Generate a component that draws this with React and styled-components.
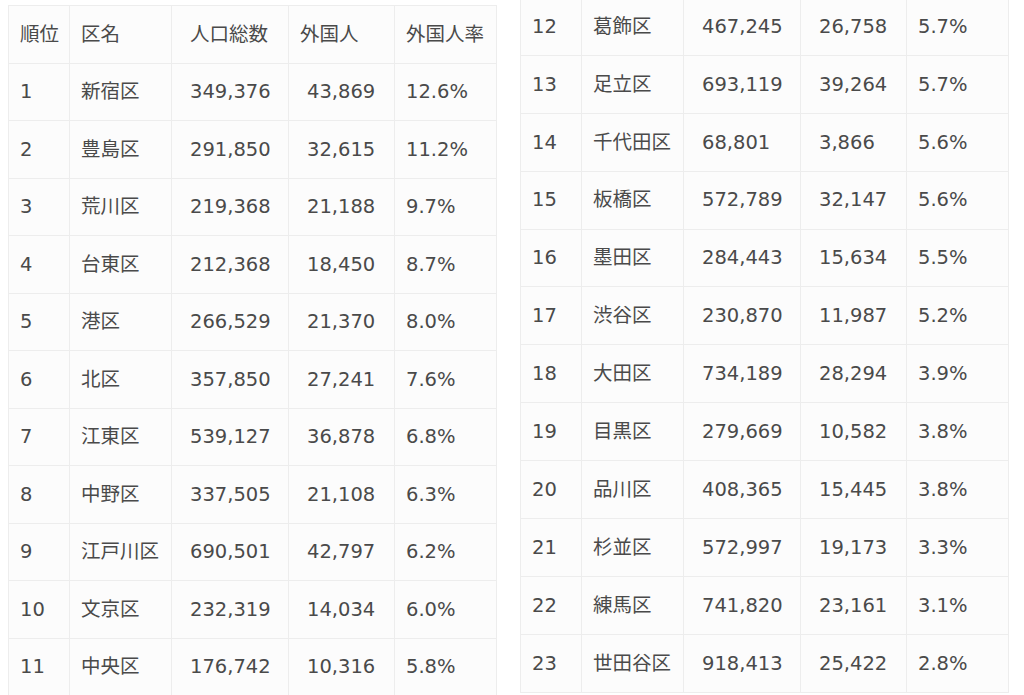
import React from 'react';
import styled, { createGlobalStyle } from 'styled-components';

const leftRows = [
  ['1', '新宿区', '349,376', '43,869', '12.6%'],
  ['2', '豊島区', '291,850', '32,615', '11.2%'],
  ['3', '荒川区', '219,368', '21,188', '9.7%'],
  ['4', '台東区', '212,368', '18,450', '8.7%'],
  ['5', '港区', '266,529', '21,370', '8.0%'],
  ['6', '北区', '357,850', '27,241', '7.6%'],
  ['7', '江東区', '539,127', '36,878', '6.8%'],
  ['8', '中野区', '337,505', '21,108', '6.3%'],
  ['9', '江戸川区', '690,501', '42,797', '6.2%'],
  ['10', '文京区', '232,319', '14,034', '6.0%'],
  ['11', '中央区', '176,742', '10,316', '5.8%'],
];

const rightRows = [
  ['12', '葛飾区', '467,245', '26,758', '5.7%'],
  ['13', '足立区', '693,119', '39,264', '5.7%'],
  ['14', '千代田区', '68,801', '3,866', '5.6%'],
  ['15', '板橋区', '572,789', '32,147', '5.6%'],
  ['16', '墨田区', '284,443', '15,634', '5.5%'],
  ['17', '渋谷区', '230,870', '11,987', '5.2%'],
  ['18', '大田区', '734,189', '28,294', '3.9%'],
  ['19', '目黒区', '279,669', '10,582', '3.8%'],
  ['20', '品川区', '408,365', '15,445', '3.8%'],
  ['21', '杉並区', '572,997', '19,173', '3.3%'],
  ['22', '練馬区', '741,820', '23,161', '3.1%'],
  ['23', '世田谷区', '918,413', '25,422', '2.8%'],
];

const header = ['順位', '区名', '人口総数', '外国人', '外国人率'];
const colWidths = [61, 102, 117, 106, 102];

function RankTable({ rows, withHeader, top, rowHeight }) {
  return (
    <Table $top={top}>
      <colgroup>
        {colWidths.map((w, i) => <col key={i} width={w} />)}
      </colgroup>
      <tbody>
        {withHeader && (
          <Row $h={rowHeight}>
            {header.map((h, i) => <Cell key={h} $indent={i === 2}>{h}</Cell>)}
          </Row>
        )}
        {rows.map(r => (
          <Row key={r[0]} $h={rowHeight}>
            {r.map((v, i) => <Cell key={i} $indent={i === 2 || i === 3}>{v}</Cell>)}
          </Row>
        ))}
      </tbody>
    </Table>
  );
}

function App() {
  return (
    <>
      <GlobalStyle />
      <Page>
        <RankTable rows={leftRows} withHeader top={5} rowHeight={57.5} />
        <RankTable rows={rightRows} top={-3} rowHeight={57.9} />
      </Page>
    </>
  );
}

const GlobalStyle = createGlobalStyle`
  html, body {
    margin: 0;
    background: #fff;
    overflow: hidden;
  }
`;

const Page = styled.div`
  display: flex;
  align-items: flex-start;
  gap: 23px;
  padding-left: 8px;
  height: 695px;
  overflow: hidden;
`;

const Table = styled.table`
  border-collapse: collapse;
  table-layout: fixed;
  width: 489px;
  margin-top: ${p => p.$top}px;
  font-family: "DejaVu Sans", "Noto Sans CJK JP", sans-serif;
  font-size: 19.5px;
  color: #4a4a4a;
`;

const Row = styled.tr`
  height: ${p => p.$h}px;
  background: #fcfcfc;
`;

const Cell = styled.td`
  border: 1px solid #ededed;
  padding: 0 0 0 ${p => (p.$indent ? 18 : 11)}px;
  vertical-align: middle;
  white-space: nowrap;
  line-height: 1.2;
`;

export default App;
